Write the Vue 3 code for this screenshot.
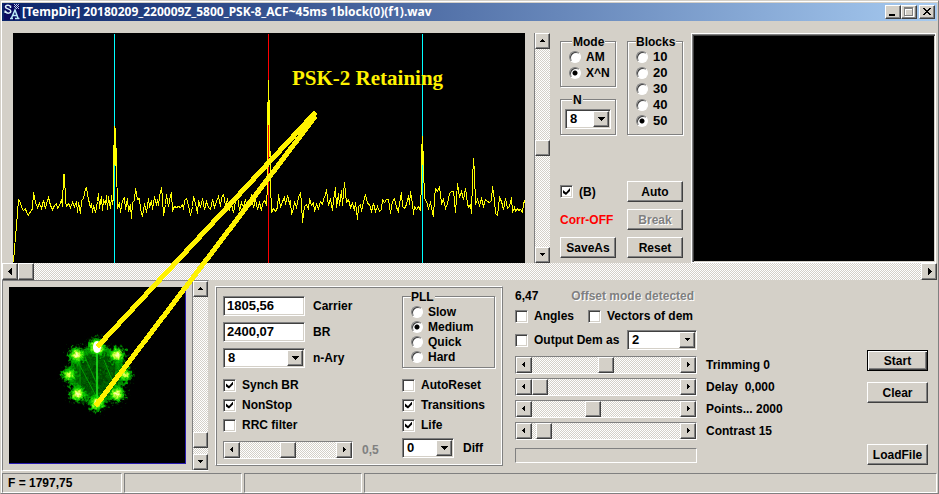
<script setup>
import { ref, reactive } from 'vue'

const mode = ref('X^N')
const order = ref('8')
const blocks = ref('50')
const bands = ref(true)
const carrier = ref('1805,56')
const baud = ref('2400,07')
const nary = ref('8')
const pll = ref('Medium')
const diff = ref('0')
const demAs = ref('2')
const angles = ref(false)
const vectors = ref(false)
const outputDem = ref(false)
const chartLevel = ref(50)
const chartPos = ref(0)
const scopeLevel = ref(96)
const rolloff = ref(50)

const leftFlags = reactive([
  { label: 'Synch BR', on: true },
  { label: 'NonStop', on: true },
  { label: 'RRC filter', on: false }
])
const rightFlags = reactive([
  { label: 'AutoReset', on: false },
  { label: 'Transitions', on: true },
  { label: 'Life', on: true }
])
const sliders = reactive([
  { label: 'Trimming 0', name: 'Trimming', pos: 50 },
  { label: 'Delay  0,000', name: 'Delay', pos: 0 },
  { label: 'Points... 2000', name: 'Points', pos: 40 },
  { label: 'Contrast 15', name: 'Contrast', pos: 3 }
])

const trace =
  '13,262 14,248 16,225 18,199 20,202 21,207 23,210 25,208 26,212 28,215 29,212 31,211 32,207 33,192 35,202 37,207 39,203 41,208 43,200 45,208 46,203 48,197 50,205 52,209 54,205 56,203 57,208 59,205 61,199 62,206 63,174 64,174 65,200 66,206 68,203 70,207 72,202 74,206 76,201 77,212 78,202 80,213 81,200 83,198 85,188 86,187 88,199 90,207 91,203 92,212 93,205 95,212 97,201 98,193 99,208 101,196 102,210 103,199 105,204 106,195 107,209 108,196 110,208 111,195 112,204 113,198 113,165 114,126 115,129 116,165 117,208 119,202 120,212 122,200 124,197 125,209 127,198 128,211 130,204 131,218 132,202 134,200 135,188 137,199 139,198 140,209 142,216 144,203 146,212 148,198 149,207 151,200 152,209 154,196 156,205 157,199 158,205 159,196 161,187 162,197 163,215 165,204 166,194 168,206 170,195 171,193 172,210 174,206 176,207 178,206 180,207 182,204 183,209 184,200 186,198 188,205 190,215 192,206 193,196 195,203 197,213 198,200 200,207 202,198 204,209 206,201 208,207 210,209 212,199 214,207 216,201 218,196 220,206 221,197 223,194 225,205 227,199 229,209 231,204 233,212 235,201 237,196 239,210 241,202 243,207 245,199 247,209 249,200 251,195 253,207 255,199 257,209 259,202 261,210 262,203 264,200 266,204 267,185 267,125 268,80 269,117 270,182 271,212 273,208 275,211 277,207 278,194 280,207 282,201 284,197 285,204 287,195 289,203 290,200 291,214 293,208 294,201 296,207 298,197 300,192 301,202 302,222 304,206 306,204 308,209 309,198 311,205 313,202 314,211 316,204 318,208 320,201 322,204 323,199 325,194 326,189 328,205 330,198 332,210 333,200 335,187 336,207 338,193 339,205 341,190 342,205 344,182 346,202 348,199 350,207 352,203 354,210 355,202 357,219 358,206 360,204 361,211 363,201 365,194 367,203 369,204 371,211 373,203 375,211 377,206 379,211 381,209 382,199 384,202 386,199 388,199 390,213 392,201 394,198 396,207 398,211 399,203 401,192 402,206 404,208 406,204 408,195 409,204 410,191 412,203 413,214 414,206 416,209 418,206 420,210 421,180 422,136 423,165 424,198 426,201 428,208 430,202 432,212 433,216 434,198 435,188 437,191 439,186 441,203 443,199 445,208 447,203 449,193 451,191 453,191 454,200 455,212 457,183 459,197 461,191 463,199 465,188 467,203 468,207 470,204 471,213 472,180 473,158 474,172 475,204 477,199 479,205 481,198 483,206 485,199 487,201 489,202 491,200 492,186 494,200 495,213 497,215 499,197 501,201 503,209 505,198 507,208 509,206 511,197 512,212 514,207 515,211 517,208 518,210 520,209 522,212 523,204 524,200'

const symbols = [
  { x: 97, y: 347, r: 4 },
  { x: 117, y: 355, r: 3 },
  { x: 125, y: 375, r: 2 },
  { x: 117, y: 394, r: 3 },
  { x: 97, y: 403, r: 3 },
  { x: 78, y: 394, r: 3 },
  { x: 69, y: 375, r: 2 },
  { x: 77, y: 355, r: 3 }
]
const chords = []
for (let i = 0; i < symbols.length; i++) {
  for (let j = i + 1; j < symbols.length; j++) {
    chords.push({ a: symbols[i], b: symbols[j] })
  }
}
</script>

<template>
  <main class="window">
    <header class="title">
      <svg class="logo" viewBox="0 0 16 16" width="16" height="16" aria-hidden="true">
        <rect width="16" height="16" fill="#0a0a60" />
        <path d="M6.5 4V1.5M6.5 2.5C5.5 .7 1.5 .8 1.5 3S6.800 4.500 6.800 7 3 10 1.500 7.500M1.200 9V6.500" fill="none" stroke="#d8f0f8" stroke-width="1.500" />
        <path d="M6 14.500h3M11 14.500h4.500M7.500 14l3.500-8 3 8M8.700 11.500h4" fill="none" stroke="#b8e8f8" stroke-width="1.500" />
        <path d="M10 .5h1m1 0h1m1 0h1M11 1.500h1m1 0h1M10 2.500h1m1 0h1m1 0h1M11 3.500h1m1 0h1M12 4.500h1m1 0h1" stroke="#b8c8e8" stroke-width="1" />
      </svg>
      <h1>[TempDir] 20180209_220009Z_5800_PSK-8_ACF~45ms 1block(0)(f1).wav</h1>
      <div class="caption-buttons">
        <button class="cap" aria-label="Minimize"><svg width="12" height="10" shape-rendering="crispEdges"><path d="M2 7h6v2H2z" /></svg></button>
        <button class="cap" aria-label="Maximize"><svg width="12" height="10" shape-rendering="crispEdges"><path d="M2.500 1.500h8v8h-8zM2 2.500h9" fill="none" stroke="#fff" /><path d="M1.500 .5h8v8h-8zM1 1.500h9" fill="none" stroke="#808080" /></svg></button>
        <button class="cap close" aria-label="Close"><svg width="12" height="10" shape-rendering="crispEdges"><path d="M2 1h2v1h1v1h2V2h1V1h2v1H9v1H8v1H7v1h1v1h1v1h1v1H8V7H7V6H5v1H4v1H2V7h1V6h1V5h1V4H4V3H3V2H2z" /></svg></button>
      </div>
    </header>

    <section class="upper">
      <svg class="chart" viewBox="13 33 512 230" width="512" height="230" shape-rendering="crispEdges" role="img" aria-label="Autocorrelation">
        <rect x="13" y="33" width="512" height="230" />
        <path d="M114.500 34v229M422.500 34v229" stroke="#00ffff" />
        <path d="M268.500 34v229" stroke="#ff0000" />
        <polyline :points="trace" transform="translate(.5 .5)" fill="none" stroke="#ffff00" />
        <path d="M114.500 126v39M115.500 129v37M268.500 80v45M269.500 117v40M422.500 136v29M421.500 144v37" stroke="#ffff00" />
        <path d="M114.500 165v98M422.500 165v98" stroke="#00ffff" />
        <path d="M268.500 125v138" stroke="#ff0000" />
      </svg>

      <div class="scroll vertical">
        <button class="arrow" aria-label="Scroll up"><svg width="6" height="6" shape-rendering="crispEdges"><path d="M2 1h1v1h1v1h1v1H0V3h1V2h1z" /></svg></button>
        <input v-model="chartLevel" type="range" aria-label="Chart level">
        <button class="arrow" aria-label="Scroll down"><svg width="6" height="6" shape-rendering="crispEdges"><path d="M0 1h5v1H4v1H3v1H2V3H1V2H0z" /></svg></button>
      </div>

      <div class="settings">
        <div class="groups">
          <div class="stack">
            <fieldset>
              <legend class="inset">Mode</legend>
              <label v-for="m in ['AM', 'X^N']" :key="m" class="radio"><input v-model="mode" type="radio" name="mode" :value="m">{{ m }}</label>
            </fieldset>
            <fieldset class="order">
              <legend class="inset">N</legend>
              <span class="drop">
                <select v-model="order" aria-label="N"><option>2</option><option>4</option><option>8</option></select>
                <i class="tip"><svg width="7" height="4" shape-rendering="crispEdges"><path d="M0 0h7v1H6v1H5v1H4v1H3V3H2V2H1V1H0z" /></svg></i>
              </span>
            </fieldset>
          </div>
          <fieldset>
            <legend>Blocks</legend>
            <label v-for="b in ['10', '20', '30', '40', '50']" :key="b" class="radio number"><input v-model="blocks" type="radio" name="blocks" :value="b">{{ b }}</label>
          </fieldset>
        </div>
        <div class="actions">
          <label class="check"><input v-model="bands" type="checkbox">(B)</label>
          <button class="btn">Auto</button>
          <span class="warn">Corr-OFF</span>
          <button class="btn" disabled>Break</button>
          <button class="btn">SaveAs</button>
          <button class="btn">Reset</button>
        </div>
      </div>

      <div class="screen" role="img" aria-label="Spectrum"></div>
    </section>

    <div class="scroll wide">
      <button class="arrow" aria-label="Scroll left"><svg width="5" height="8" shape-rendering="crispEdges"><path d="M3 0h1v7H3V6H2V5H1V4H0V3h1V2h1V1h1z" /></svg></button>
      <input v-model="chartPos" type="range" aria-label="Position">
      <button class="arrow" aria-label="Scroll right"><svg width="5" height="8" shape-rendering="crispEdges"><path d="M1 0h1v1h1v1h1v1h1v1H4v1H3v1H2v1H1z" /></svg></button>
    </div>

    <section class="lower">
      <div class="scope">
        <svg class="plot" viewBox="9 287 177 177" width="177" height="177" role="img" aria-label="Constellation">
          <defs>
            <filter id="grain" x="-20%" y="-20%" width="140%" height="140%" color-interpolation-filters="sRGB">
              <feGaussianBlur stdDeviation="1.500" result="soft" />
              <feTurbulence type="fractalNoise" baseFrequency=".35" numOctaves="2" seed="4" />
              <feDisplacementMap in="soft" scale="14" xChannelSelector="R" yChannelSelector="G" />
            </filter>
            <filter id="glow" x="-20%" y="-20%" width="140%" height="140%" color-interpolation-filters="sRGB">
              <feGaussianBlur stdDeviation="1" result="soft" />
              <feTurbulence type="fractalNoise" baseFrequency=".4" numOctaves="1" seed="9" />
              <feDisplacementMap in="soft" scale="6" xChannelSelector="R" yChannelSelector="G" />
            </filter>
          </defs>
          <rect x="9" y="287" width="177" height="177" />
          <g filter="url(#grain)">
            <circle cx="97" cy="375" r="27" fill="#003000" />
            <circle cx="97" cy="375" r="26" fill="none" stroke="#009800" stroke-width="5" />
            <line v-for="(c, i) in chords" :key="i" :x1="c.a.x" :y1="c.a.y" :x2="c.b.x" :y2="c.b.y" stroke="#00a800" stroke-width="1" />
            <circle v-for="(s, i) in symbols" :key="'h' + i" :cx="s.x" :cy="s.y" :r="s.r + 5" fill="#00b400" />
          </g>
          <path d="M97 350v50" stroke="#20e820" stroke-width="2" opacity=".8" />
          <path d="M85 357l14 32M77 360l20 38M104 360l8 20M80 360v28M116 362v26" stroke="#00d000" stroke-width="1" opacity=".6" />
          <g filter="url(#glow)">
            <circle v-for="(s, i) in symbols" :key="'g' + i" :cx="s.x" :cy="s.y" :r="s.r + 3" fill="#20f000" />
            <circle v-for="(s, i) in symbols" :key="'y' + i" :cx="s.x" :cy="s.y" :r="s.r + 1" fill="#e8ff30" />
            <circle v-for="(s, i) in symbols" :key="'w' + i" :cx="s.x" :cy="s.y" :r="s.r - 1" fill="#ffffe0" />
          </g>
          <ellipse cx="97" cy="347" rx="4" ry="6" fill="#fff" />
          <path d="M185.500 287v177M9 463.500h177" stroke="#2a1cb0" />
        </svg>
        <div class="scroll vertical">
          <button class="arrow" aria-label="Scroll up"><svg width="6" height="6" shape-rendering="crispEdges"><path d="M2 1h1v1h1v1h1v1H0V3h1V2h1z" /></svg></button>
          <input v-model="scopeLevel" type="range" aria-label="Scope scale">
          <button class="arrow" aria-label="Scroll down"><svg width="6" height="6" shape-rendering="crispEdges"><path d="M0 1h5v1H4v1H3v1H2V3H1V2H0z" /></svg></button>
        </div>
      </div>

      <div class="modem">
        <div class="params">
          <label class="field"><input v-model="carrier" type="text">Carrier</label>
          <label class="field"><input v-model="baud" type="text">BR</label>
          <label class="field">
            <span class="drop">
              <select v-model="nary"><option>2</option><option>4</option><option>8</option></select>
              <i class="tip"><svg width="7" height="4" shape-rendering="crispEdges"><path d="M0 0h7v1H6v1H5v1H4v1H3V3H2V2H1V1H0z" /></svg></i>
            </span>n-Ary
          </label>
          <div class="flags">
            <label v-for="f in leftFlags" :key="f.label" class="check"><input v-model="f.on" type="checkbox">{{ f.label }}</label>
          </div>
          <div class="rolloff">
            <span class="scroll sunken">
              <button class="arrow" aria-label="Decrease"><svg width="4" height="6" shape-rendering="crispEdges"><path d="M2 0h1v5H2V4H1V3H0V2h1V1h1z" /></svg></button>
              <input id="rolloff" v-model="rolloff" type="range">
              <button class="arrow" aria-label="Increase"><svg width="4" height="6" shape-rendering="crispEdges"><path d="M1 0h1v1h1v1h1v1H3v1H2v1H1z" /></svg></button>
            </span>
            <label class="dim" for="rolloff">0,5</label>
          </div>
        </div>
        <div class="loop">
          <fieldset class="tight">
            <legend>PLL</legend>
            <label v-for="p in ['Slow', 'Medium', 'Quick', 'Hard']" :key="p" class="radio"><input v-model="pll" type="radio" name="pll" :value="p">{{ p }}</label>
          </fieldset>
          <div class="flags">
            <label v-for="f in rightFlags" :key="f.label" class="check"><input v-model="f.on" type="checkbox">{{ f.label }}</label>
          </div>
          <label class="diff">
            <span class="drop">
              <select v-model="diff"><option>0</option><option>1</option></select>
              <i class="tip"><svg width="7" height="4" shape-rendering="crispEdges"><path d="M0 0h7v1H6v1H5v1H4v1H3V3H2V2H1V1H0z" /></svg></i>
            </span>Diff
          </label>
        </div>
      </div>

      <div class="demod">
        <div class="status-row">
          <output>6,47</output>
          <span class="embossed">Offset mode detected</span>
        </div>
        <div class="options">
          <label class="check"><input v-model="angles" type="checkbox">Angles</label>
          <label class="check"><input v-model="vectors" type="checkbox">Vectors of dem</label>
        </div>
        <div class="output-row">
          <label class="check"><input v-model="outputDem" type="checkbox">Output Dem as</label>
          <span class="drop">
            <select v-model="demAs" aria-label="Output order"><option>2</option><option>4</option></select>
            <i class="tip"><svg width="7" height="4" shape-rendering="crispEdges"><path d="M1 0h5v1H5v1H4v1H3V2H2V1H1z" /></svg></i>
          </span>
        </div>
        <div v-for="s in sliders" :key="s.name" class="slider-row">
          <span class="scroll sunken">
            <button class="arrow" :aria-label="s.name + ' down'"><svg width="4" height="6" shape-rendering="crispEdges"><path d="M2 0h1v5H2V4H1V3H0V2h1V1h1z" /></svg></button>
            <input :id="s.name" v-model="s.pos" type="range">
            <button class="arrow" :aria-label="s.name + ' up'"><svg width="4" height="6" shape-rendering="crispEdges"><path d="M1 0h1v1h1v1h1v1H3v1H2v1H1z" /></svg></button>
          </span>
          <label :for="s.name">{{ s.label }}</label>
        </div>
        <div class="progress" role="progressbar" aria-label="Progress"></div>
      </div>

      <div class="commands">
        <button class="btn default">Start</button>
        <button class="btn">Clear</button>
        <button class="btn last">LoadFile</button>
      </div>
    </section>

    <footer class="statusbar">
      <span>F = 1797,75</span><span></span><span></span><span></span>
    </footer>

    <svg class="callout" viewBox="0 0 939 494" width="939" height="494">
      <path d="M314 114L99 345M314 118L97 404" stroke="#fff200" stroke-width="5" stroke-linecap="round" shape-rendering="crispEdges" />
      <text x="292" y="85">PSK-2 Retaining</text>
    </svg>
  </main>
</template>

<style>
body {
  background: #d4d0c8;
}
</style>

<style scoped>
* {
  box-sizing: border-box;
}
.window {
  position: relative;
  display: flex;
  flex-direction: column;
  min-height: 100vh;
  padding: 1px 1px 0;
  background: #d4d0c8;
  border: 1px solid;
  border-color: #d4d0c8 #808080 #808080 #d4d0c8;
  box-shadow: inset 1px 1px 0 #fff;
  color: #000;
  font: bold 12px/14px "Liberation Sans", Arial, sans-serif;
}
button, input, select {
  margin: 0;
  font: inherit;
  color: inherit;
}
svg {
  display: block;
}
.title {
  display: flex;
  align-items: center;
  height: 18px;
  margin: 1px 0 0;
  padding: 0 2px;
  background: linear-gradient(90deg, #0a246a, #a6caf0);
}
.title h1 {
  flex: 1;
  margin: 0 0 0 2px;
  color: #fff;
  font: bold 12px/18px "Noto Sans", sans-serif;
  white-space: nowrap;
}
.caption-buttons {
  display: flex;
}
.cap, .arrow, .btn, .tip {
  display: flex;
  align-items: center;
  justify-content: center;
  padding: 0;
  background: #d4d0c8;
  border: 1px solid;
  border-color: #fff #404040 #404040 #fff;
  border-radius: 0;
  box-shadow: inset -1px -1px 0 #808080;
}
.cap {
  width: 16px;
  height: 14px;
}
.cap.close {
  margin-left: 2px;
}

.upper {
  display: flex;
  padding: 12px 1px 0 11px;
}
.chart {
  flex: none;
}
.scroll {
  display: flex;
  background: repeating-conic-gradient(#fff 0 25%, #d4d0c8 0 50%) 0 0 / 2px 2px;
}
.scroll input {
  appearance: none;
  flex: 1;
  min-width: 0;
  min-height: 0;
  background: none;
}
.scroll input::-webkit-slider-thumb {
  appearance: none;
  width: 16px;
  height: 16px;
  background: #d4d0c8;
  border: 1px solid;
  border-color: #fff #404040 #404040 #fff;
  box-shadow: inset -1px -1px 0 #808080;
}
.arrow {
  flex: none;
  width: 16px;
  height: 16px;
}
.vertical {
  flex-direction: column;
  width: 16px;
  border-left: 1px solid #808080;
}
.vertical input {
  writing-mode: vertical-lr;
  width: 15px;
}
.vertical .arrow, .vertical input::-webkit-slider-thumb {
  width: 15px;
}
.upper .vertical {
  margin-left: 9px;
}
.sunken {
  height: 18px;
  border: 1px solid;
  border-color: #808080 #fff #fff #808080;
}
.wide {
  height: 17px;
}
.wide .arrow, .wide input::-webkit-slider-thumb {
  height: 17px;
}

.settings {
  display: flex;
  flex-direction: column;
  justify-content: space-between;
  margin: 0 8px 0 10px;
  padding-bottom: 5px;
}
.groups {
  display: grid;
  grid-template-columns: 56px 56px;
  column-gap: 11px;
}
.stack {
  display: flex;
  flex-direction: column;
  justify-content: space-between;
}
fieldset {
  min-width: 0;
  margin: 0;
  padding: 0 0 5px 8px;
  border: 1px solid #808080;
  box-shadow: 1px 1px 0 #fff, inset 1px 1px 0 #fff;
}
fieldset.order {
  padding: 2px 4px 5px;
}
fieldset.tight {
  padding-bottom: 3px;
}
legend {
  padding: 2px 1px 0 0;
  line-height: 14px;
  background: #d4d0c8;
}
legend.inset {
  margin-left: 3px;
  padding-left: 1px;
}
.order legend.inset {
  margin-left: 7px;
}
.radio, .check {
  display: flex;
  align-items: center;
  gap: 5px;
  height: 16px;
  white-space: nowrap;
}
.tight .radio {
  height: 15px;
}
.radio input {
  appearance: none;
  flex: none;
  width: 12px;
  height: 12px;
  border: 1px solid;
  border-color: #808080 #fff #fff #808080;
  border-radius: 50%;
  background: #fff;
  box-shadow: inset 1px 1px 0 #404040;
}
.radio input:checked {
  background: radial-gradient(circle at center, #000 2px, #fff 3px);
}
.number, .field input {
  font-size: 13px;
}
.check {
  gap: 6px;
}
.check input {
  appearance: none;
  flex: none;
  display: grid;
  place-items: center;
  width: 13px;
  height: 13px;
  border: 1px solid;
  border-color: #808080 #fff #fff #808080;
  background: #fff;
  box-shadow: inset 1px 1px 0 #404040, inset -1px -1px 0 #d4d0c8;
}
.check input:checked::before {
  content: "";
  width: 7px;
  height: 7px;
  background: #000;
  clip-path: polygon(0 29%, 43% 64%, 100% 0, 100% 43%, 43% 100%, 0 71%);
}
.actions {
  display: grid;
  grid-template-columns: 56px 56px;
  gap: 7px 11px;
  align-items: center;
}
.btn {
  width: 56px;
  height: 21px;
}
.btn:disabled {
  color: #808080;
  text-shadow: 1px 1px 0 #fff;
}
.warn {
  color: #f00;
  font-weight: bold;
  white-space: nowrap;
}
.drop {
  display: grid;
  height: 20px;
  border: 1px solid;
  border-color: #808080 #fff #fff #808080;
  background: #fff;
  box-shadow: inset 1px 1px 0 #404040, inset -1px -1px 0 #d4d0c8;
}
.drop select {
  grid-area: 1 / 1;
  appearance: none;
  min-width: 0;
  padding: 0 16px 0 4px;
  border: 0;
  border-radius: 0;
  background: none;
  font-size: 13px;
}
.tip {
  grid-area: 1 / 1;
  justify-self: end;
  width: 16px;
  margin: 1px;
  pointer-events: none;
}
.screen {
  flex: 1;
  background: #000;
  border: 1px solid #fff;
  box-shadow: inset 1px 1px 0 #808080, inset 2px 2px 0 #404040, inset -1px -1px 0 #d4d0c8;
}

.lower {
  display: flex;
  height: 191px;
}
.scope {
  display: flex;
  gap: 6px;
  border: 1px solid;
  border-color: #808080 transparent #fff #808080;
}
.scope .plot {
  margin: 6px 0 6px 6px;
}
.modem {
  display: grid;
  grid-template-columns: 179px 93px;
  align-self: start;
  height: 180px;
  margin: 6px 0 0 6px;
  padding: 0 7px;
  border: 1px solid;
  border-color: #fff #808080 #808080 #fff;
  box-shadow: inset 1px 1px 0 #808080, inset -1px -1px 0 #fff;
}
.params {
  display: flex;
  flex-direction: column;
  gap: 6px;
  padding-top: 9px;
}
.field {
  display: flex;
  align-items: center;
  gap: 8px;
  height: 20px;
}
.field input, .field .drop {
  width: 82px;
  height: 20px;
}
.field input {
  padding: 0 3px 1px;
  border: 1px solid;
  border-color: #808080 #fff #fff #808080;
  border-radius: 0;
  background: #fff;
  box-shadow: inset 1px 1px 0 #404040, inset -1px -1px 0 #d4d0c8;
}
.flags {
  display: grid;
  grid-auto-rows: 20px;
  align-items: center;
  padding-top: 1px;
}
.rolloff {
  display: flex;
  align-items: center;
  gap: 9px;
}
.rolloff .scroll {
  width: 130px;
}
.dim {
  color: #808080;
}
.loop .flags {
  margin-top: 6px;
}
.loop {
  padding-top: 1px;
}
.diff {
  display: flex;
  align-items: center;
  gap: 9px;
  margin-top: 3px;
}
.diff .drop {
  width: 52px;
}
.demod {
  flex: 1;
  padding: 7px 0 0 12px;
}
.status-row {
  display: flex;
  gap: 33px;
  height: 17px;
  align-items: center;
}
.embossed {
  color: #808080;
  text-shadow: 1px 1px 0 #fff;
}
.options {
  display: flex;
  gap: 14px;
  margin-top: 4px;
}
.output-row {
  display: flex;
  align-items: center;
  gap: 7px;
  margin-top: 6px;
}
.output-row .check {
  width: 105px;
}
.output-row .drop {
  width: 70px;
}
.slider-row {
  display: flex;
  align-items: center;
  gap: 9px;
  margin-top: 4px;
  white-space: pre;
}
.output-row + .slider-row {
  margin-top: 6px;
}
.slider-row .scroll {
  width: 182px;
}
.progress {
  width: 182px;
  height: 15px;
  margin-top: 8px;
  border: 1px solid;
  border-color: #808080 #fff #fff #808080;
}
.commands {
  display: flex;
  flex-direction: column;
  gap: 11px;
  padding: 70px 9px 6px 0;
}
.commands .btn {
  width: 61px;
}
.commands .default {
  border-color: #000;
  box-shadow: inset 1px 1px 0 #fff, inset -1px -1px 0 #404040, inset -2px -2px 0 #808080;
}
.commands .last {
  margin-top: auto;
}
.statusbar {
  display: grid;
  grid-template-columns: 120px 118px 118px 1fr;
  gap: 2px;
  height: 20px;
  margin-top: 2px;
}
.statusbar span {
  padding: 2px 5px;
  border: 1px solid;
  border-color: #808080 #fff #fff #808080;
}
.callout {
  position: absolute;
  top: -1px;
  left: -1px;
  pointer-events: none;
}
.callout text {
  fill: #fff200;
  font: bold 21px "Liberation Serif", "Times New Roman", serif;
}
</style>
